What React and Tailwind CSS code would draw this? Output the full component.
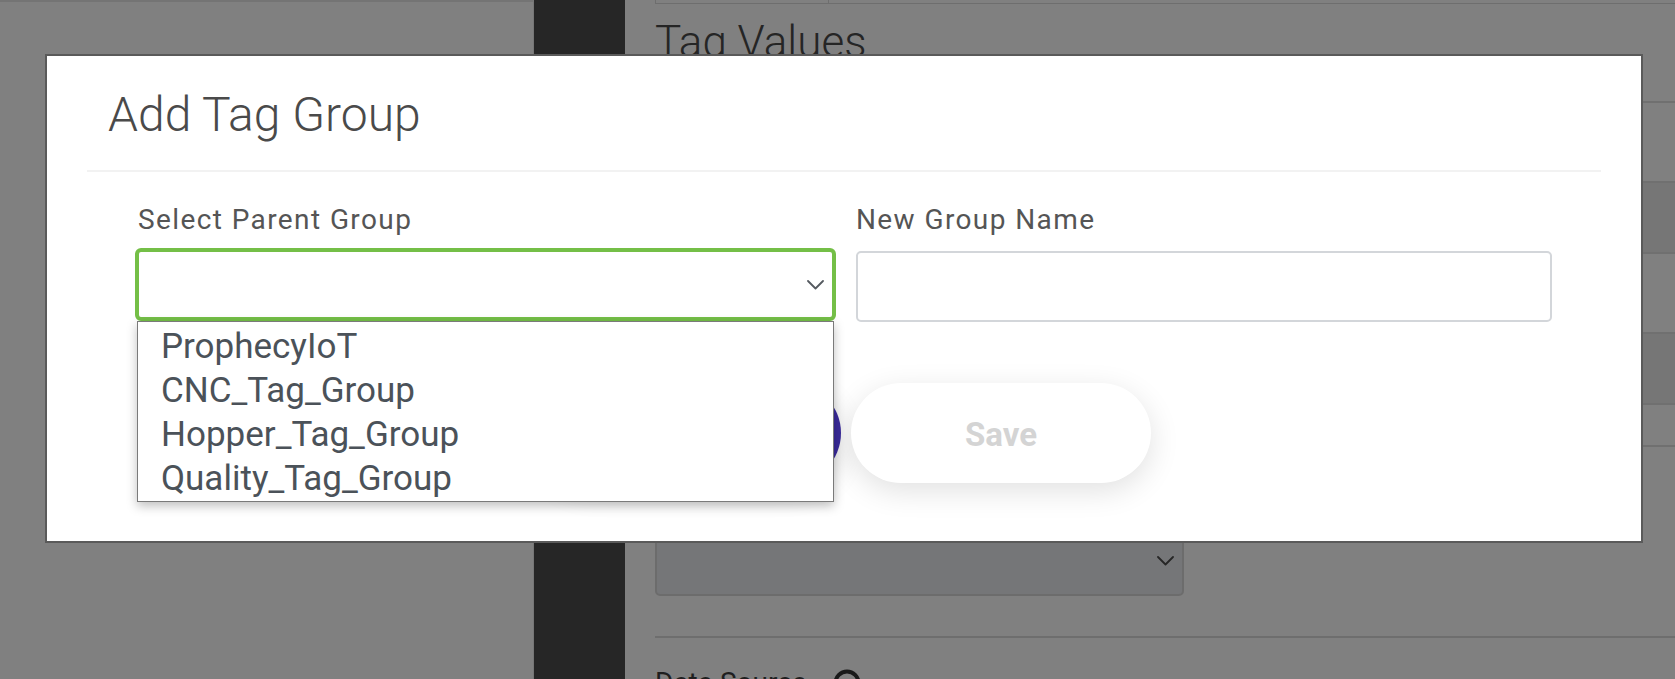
const parentGroups = [
  "ProphecyIoT",
  "CNC_Tag_Group",
  "Hopper_Tag_Group",
  "Quality_Tag_Group",
];

const tableRows = [
  { h: "h-[80px]", dark: false },
  { h: "h-[71px]", dark: true },
  { h: "h-[80px]", dark: false },
  { h: "h-[71px]", dark: true },
  { h: "h-[42px]", dark: false },
];

const Chevron = ({ className }) => (
  <svg width="17" height="10" viewBox="0 0 17 10" fill="none" className={className}>
    <polyline points="1,1 8.5,8.5 16,1" stroke="currentColor" strokeWidth="1.8" strokeLinecap="round" strokeLinejoin="round" />
  </svg>
);

const BackgroundPage = () => (
  <div className="flex h-[679px] w-[1675px] bg-[#808080]">
    {/* Left page area */}
    <div className="w-[534px] shrink-0 border-r border-[#767676]">
      <div className="h-[2px] bg-[#747474]" />
    </div>

    {/* Dark rail */}
    <div className="w-[91px] shrink-0 bg-[#262626]" />

    {/* Content */}
    <div className="flex-1 pl-[30px] flex flex-col">
      <div className="flex h-[4px] shrink-0">
        <div className="w-[173px] border-l border-b border-[#6e6e6e]" />
        <div className="flex-1 border-l border-b border-[#6e6e6e]" />
      </div>
      <h2 className="mt-[16px] text-[44px] leading-[44px] text-[#252525] font-light shrink-0">Tag Values</h2>

      <div className="mt-[37px] border-t-2 border-[#707070] shrink-0">
        {tableRows.map((r, i) => (
          <div
            key={i}
            className={`${r.h} border-b-2 border-[#707070] ${r.dark ? "bg-[#767676]" : ""}`}
          />
        ))}
      </div>

      <div className="mt-[79px] w-[529px] h-[70px] shrink-0 rounded-[5px] border-2 border-[#6c6c6c] bg-[#757678] flex items-center justify-end pr-[8px]">
        <Chevron className="text-[#262626]" />
      </div>

      <div className="mt-[40px] h-[2px] shrink-0 bg-[#6e6e6e]" />

      <div className="mt-[31px] flex items-center text-[28px] leading-[28px] text-[#1f1f1f] shrink-0">
        <span>Data Source</span>
        <svg width="28" height="28" viewBox="0 0 28 28" fill="none" className="ml-[26px]">
          <circle cx="14" cy="14" r="11.5" stroke="#1a1a1a" strokeWidth="4" />
        </svg>
      </div>
    </div>
  </div>
);

const AddTagGroupModal = () => (
  <div className="absolute left-[45px] top-[54px] w-[1598px] h-[489px] bg-white border-2 border-[#5a5a5a] flex flex-col">
    {/* Header */}
    <div className="mx-[40px] pt-[35px] pb-[31px] pl-[21px] border-b-2 border-[#f2f2f2]">
      <h1 className="text-[48px] leading-[48px] text-[#4a4a4a] font-light">Add Tag Group</h1>
    </div>

    {/* Form */}
    <div className="pl-[88px] pt-[34px] grid grid-cols-[701px_696px] gap-x-[20px]">
      <div className="flex flex-col relative">
        <label className="pl-[3px] text-[28px] leading-[28px] tracking-[1.4px] text-[#555555]">Select Parent Group</label>
        <div className="mt-[14px] h-[73px] rounded-[6px] border-4 border-[#74bf47] flex items-center justify-end pr-[8px]">
          <Chevron className="text-[#555a60]" />
        </div>

        {/* Open options list */}
        <ul className="absolute z-20 left-[2px] right-[2px] top-[115px] bg-white border border-[#7a7a7a] pt-[3px] shadow-[0_4px_10px_rgba(0,0,0,0.25)]">
          {parentGroups.map((g) => (
            <li key={g} className="pl-[23px] text-[35px] leading-[44px] text-[#4b5259]">
              {g}
            </li>
          ))}
        </ul>
      </div>

      <div className="flex flex-col">
        <label className="text-[28px] leading-[28px] tracking-[1.4px] text-[#555555]">New Group Name</label>
        <input
          type="text"
          className="mt-[17px] h-[71px] rounded-[5px] border-2 border-[#d3d6da] bg-white px-4 text-[28px] outline-none"
        />
      </div>
    </div>

    {/* Buttons */}
    <div className="mt-[61px] flex justify-center gap-[10px] pl-[4px]">
      <button className="w-[300px] h-[100px] rounded-full bg-[#3a2b9c] shadow-[0_8px_30px_rgba(0,0,0,0.12)]" />
      <button className="w-[300px] h-[100px] pt-[3px] rounded-full bg-white text-[33px] font-bold text-[#d4d4d4] shadow-[0_8px_30px_rgba(0,0,0,0.12)]">
        Save
      </button>
    </div>
  </div>
);

export default function App() {
  return (
    <div className="relative w-[1675px] h-[679px] overflow-hidden font-['Roboto','Noto_Sans',sans-serif]">
      <BackgroundPage />
      <AddTagGroupModal />
    </div>
  );
}
